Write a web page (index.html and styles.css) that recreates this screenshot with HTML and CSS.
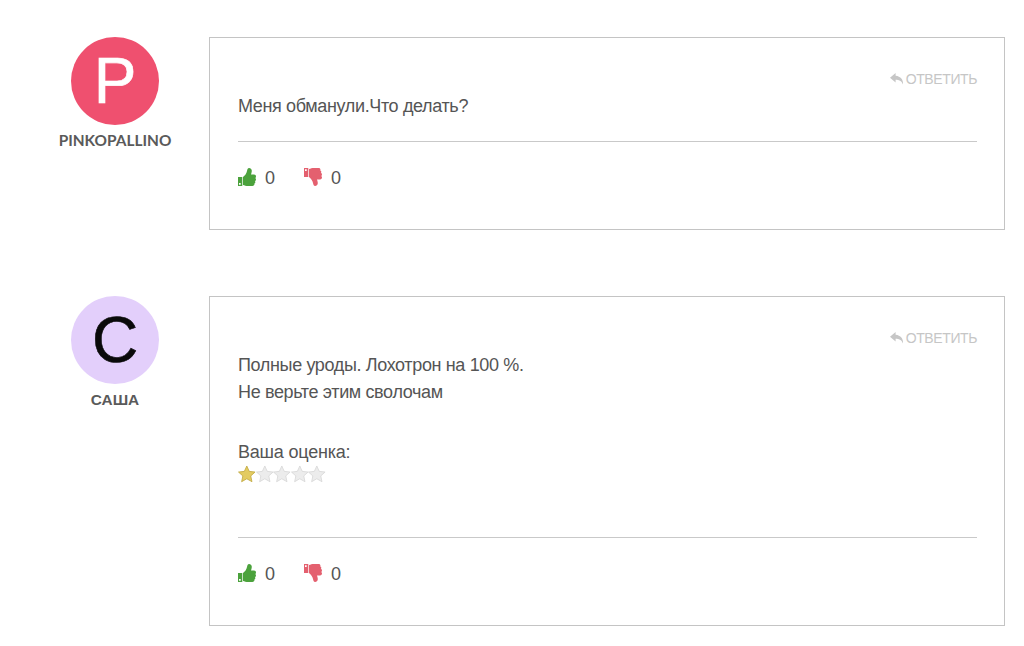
FILE: index.html
```html
<!DOCTYPE html>
<html lang="ru">
<head>
<meta charset="utf-8">
<title>Отзывы</title>
<link rel="stylesheet" href="styles.css">
</head>
<body>
<svg class="defs" width="0" height="0" aria-hidden="true">
  <symbol id="thumb" viewBox="0 0 18 18">
    <path d="M0 9h4.300v9H0z M1 15.100v1.700h1.700v-1.700z" fill-rule="evenodd"/>
    <path d="M5 9C7 7.500 8.500 5.500 9 3 9.300 1.300 10 0 11 0c1.800 0 2.800 1.400 2.800 3 0 1.300-.5 2.300-.8 3.500h3c1.300 0 2 .9 2 1.900 0 .7-.3 1.200-.7 1.600.5.400.7 1 .7 1.500 0 .8-.4 1.300-1 1.700.3.400.4.800.3 1.200-.1.600-.5 1-1 1.200.2.400.2.700.1 1-.2.900-1 1.400-1.900 1.400H10c-2 0-3.500-.5-5-1z"/>
  </symbol>
  <symbol id="star" viewBox="0 0 18 18">
    <path d="M9 .8l2.500 5.500 6 .7-4.450 4 1.250 5.900L9 13.900l-5.300 3 1.250-5.900L.5 7l6-.7z"/>
  </symbol>
</svg>
<main class="comments">
  <article class="comment comment-first">
    <div class="author">
      <div class="avatar avatar-pink">P</div>
      <div class="author-name name-lato">PINKOPALLINO</div>
    </div>
    <div class="card">
      <a class="reply"><svg class="reply-icon" viewBox="0 0 14 12"><path d="M5.600 0L0 4.700l5.600 4.800V6.700c3.400 0 5.800.8 7.400 4.800.500-4.600-2.300-8.300-7.400-8.700z"/></svg>ОТВЕТИТЬ</a>
      <div class="body">
        <p class="text">Меня обманули.Что делать?</p>
      </div>
      <div class="votes">
        <span class="vote"><svg class="icon up"><use href="#thumb"/></svg>0</span>
        <span class="vote"><svg class="icon down"><use href="#thumb"/></svg>0</span>
      </div>
    </div>
  </article>
  <article class="comment">
    <div class="author">
      <div class="avatar avatar-lilac">С</div>
      <div class="author-name">САША</div>
    </div>
    <div class="card">
      <a class="reply"><svg class="reply-icon" viewBox="0 0 14 12"><path d="M5.600 0L0 4.700l5.600 4.800V6.700c3.400 0 5.800.8 7.400 4.800.500-4.600-2.300-8.300-7.400-8.700z"/></svg>ОТВЕТИТЬ</a>
      <div class="body body-long">
        <p class="text">Полные уроды. Лохотрон на 100 %.</p>
        <p class="text">Не верьте этим сволочам</p>
        <p class="text rating-label">Ваша оценка:</p>
        <div class="stars">
          <svg class="star star-on"><use href="#star"/></svg>
          <svg class="star"><use href="#star"/></svg>
          <svg class="star"><use href="#star"/></svg>
          <svg class="star"><use href="#star"/></svg>
          <svg class="star"><use href="#star"/></svg>
        </div>
      </div>
      <div class="votes">
        <span class="vote"><svg class="icon up"><use href="#thumb"/></svg>0</span>
        <span class="vote"><svg class="icon down"><use href="#thumb"/></svg>0</span>
      </div>
    </div>
  </article>
</main>
</body>
</html>
```
FILE: styles.css
```css
* { box-sizing: border-box; }
html, body { margin: 0; padding: 0; background: #fff; }
body {
  width: 1024px;
  height: 646px;
  overflow: hidden;
  font-family: "Liberation Sans", Arial, sans-serif;
  color: #555;
}
.defs { position: absolute; }
.comments {
  display: flex;
  flex-direction: column;
  gap: 66px;
  padding: 37px 19px 0 0;
}
.comment { display: flex; }
.author {
  width: 209px;
  padding-left: 21px;
  display: flex;
  flex-direction: column;
  align-items: center;
  flex: none;
}
.avatar {
  width: 88px;
  height: 88px;
  border-radius: 50%;
  display: flex;
  align-items: center;
  justify-content: center;
  font-size: 64px;
  line-height: 1;
  -webkit-text-stroke: 0.6px currentColor;
}
.avatar-pink { background: #ef506f; color: #fff; }
.avatar-lilac { background: #e3cffb; color: #0a0a0a; }
.author-name {
  margin-top: 7px;
  font-size: 15.400px;
  line-height: 17px;
  font-weight: 700;
  color: #5a5a5a;
}
.name-lato { font-family: Lato, "Liberation Sans", sans-serif; }
.card {
  position: relative;
  flex: 1;
  border: 1px solid #c4c4c4;
  padding: 0 27px 0 28px;
  display: flex;
  flex-direction: column;
}
.reply {
  position: absolute;
  top: 32px;
  right: 27px;
  display: flex;
  align-items: center;
  gap: 2px;
  font-size: 14px;
  letter-spacing: -0.4px;
  line-height: 18px;
  color: #c6c6c6;
}
.reply-icon { width: 14px; height: 12px; fill: #c6c6c6; }
.body {
  height: 104px;
  padding-top: 55px;
  border-bottom: 1px solid #c9c9c9;
}
.body-long { height: 241px; }
.text {
  margin: 0;
  font-size: 18px;
  letter-spacing: -0.36px;
  line-height: 27px;
  color: #555;
}
.rating-label { margin-top: 27px; line-height: 20px; padding-top: 9px; letter-spacing: -0.2px; }
.stars { display: flex; padding-top: 3px; }
.star { width: 17.600px; height: 18px; flex: none; fill: #ececec; stroke: #d6d6d6; stroke-width: .8; overflow: visible; }
.star-on { fill: #e3cb62; stroke: #bfa63c; }
.votes {
  display: flex;
  gap: 29px;
  padding-top: 26px;
  height: 87px;
}
.vote {
  display: flex;
  align-items: flex-start;
  gap: 9px;
  font-size: 18px;
  line-height: 20px;
  color: #555;
}
.icon { width: 18px; height: 18px; }
.up { fill: #4ba23c; }
.down { fill: #e4606f; transform: scale(1, -1); }
```
